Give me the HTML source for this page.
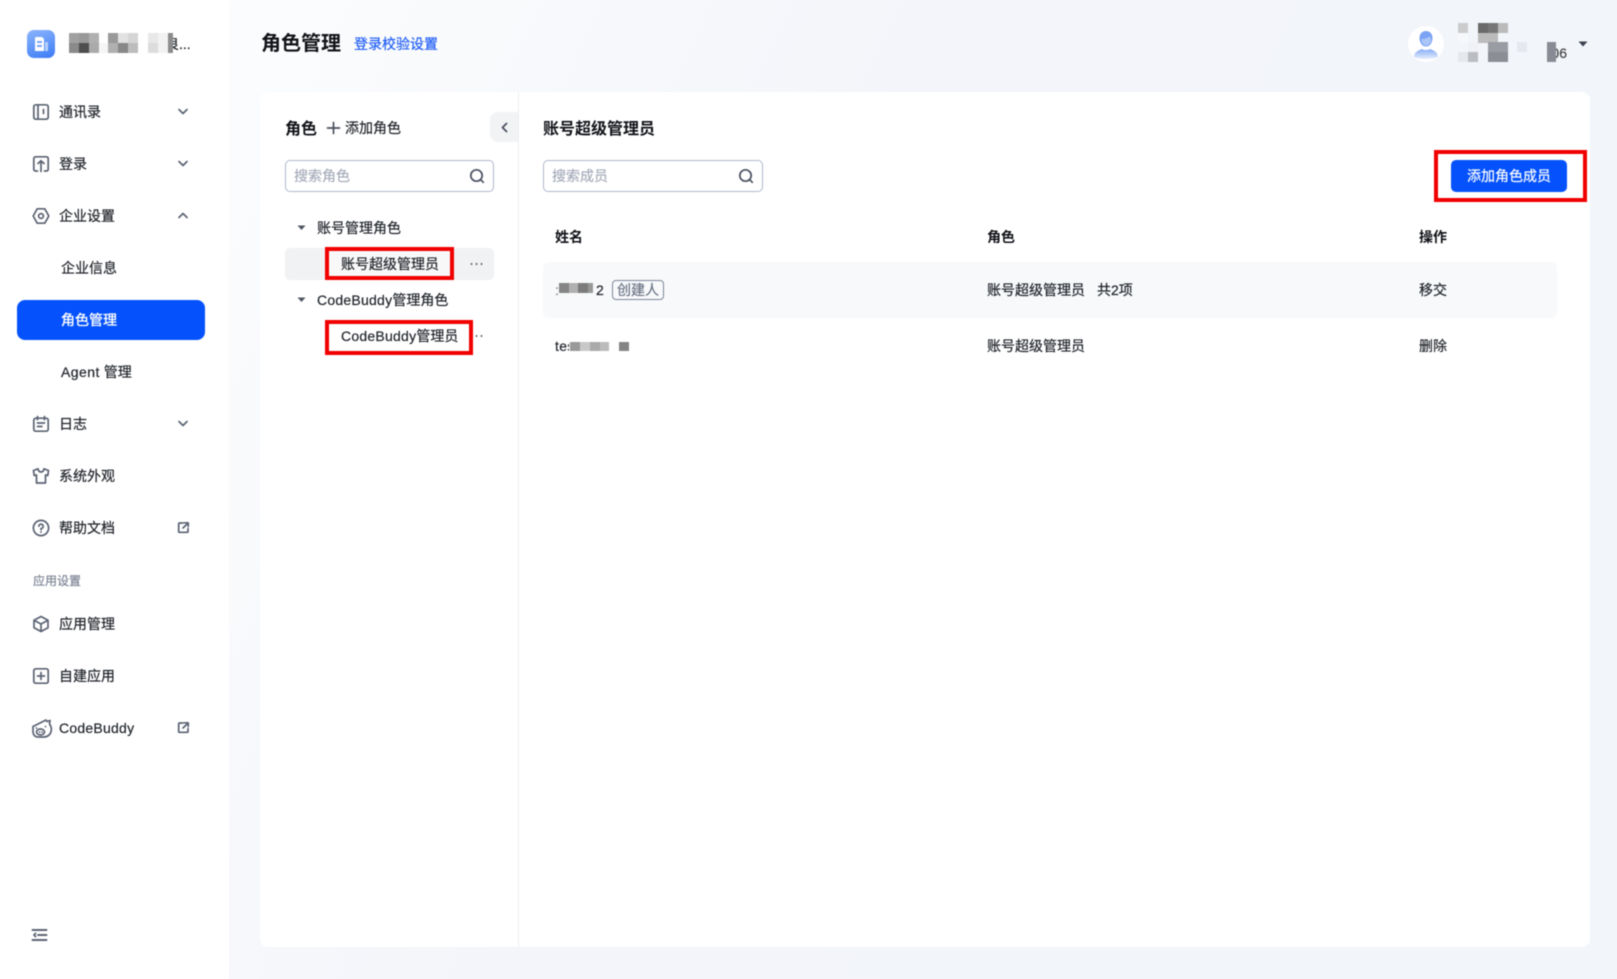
<!DOCTYPE html>
<html lang="zh"><head><meta charset="utf-8"><title>角色管理</title>
<style>
*{box-sizing:border-box}
html,body{margin:0;padding:0}
body{width:1617px;height:979px;overflow:hidden;position:relative;background:linear-gradient(115deg,#fbfcfd 14%,#f3f5fa 45%,#f2f5fa 100%);font-family:"Liberation Sans","Noto Sans CJK SC",sans-serif;font-size:14px;color:#1f2329}
#w{position:absolute;inset:0;filter:blur(.45px)}
.a,.t{position:absolute}
.t{white-space:nowrap;line-height:20px;height:20px;-webkit-text-stroke:.2px currentColor}
.b{font-weight:700;color:#111318;-webkit-text-stroke:0}
.l{letter-spacing:.24px}
.m{background:#7d7d7d;position:absolute}
svg{position:absolute;overflow:visible}
.ic{fill:none;stroke:#5b6373;stroke-width:1.7;stroke-linecap:round;stroke-linejoin:round}
.r{position:absolute;border:4px solid #f10000}
.s{position:absolute;top:160px;height:32px;background:#fff;border:1px solid #b0b7cb;border-radius:5px}
</style></head><body><div id="w">
<div class="a" style="left:0;top:0;width:229px;height:979px;background:#fff"></div>

<!-- logo -->
<div class="a" style="left:27px;top:30px;width:28px;height:28px;border-radius:7px;background:linear-gradient(160deg,#8db4fb,#3b7cf6)"></div>
<div class="a" style="left:35px;top:37px;width:9px;height:14px;background:#fff;border-radius:1px 3px 0 0"></div>
<div class="a" style="left:37px;top:41px;width:5px;height:2px;background:#7aa6f8"></div>
<div class="a" style="left:37px;top:45px;width:5px;height:2px;background:#7aa6f8"></div>
<div class="a" style="left:45px;top:42px;width:3px;height:9px;background:#b5d0fc"></div>
<div class="t" style="left:165px;top:34px;width:30px;overflow:hidden">良...</div>
<div class="m" style="left:69px;top:33px;width:10px;height:10px;background:#a0a0a0"></div>
<div class="m" style="left:79px;top:33px;width:10px;height:10px;background:#999"></div>
<div class="m" style="left:89px;top:33px;width:10px;height:10px;background:#b0b0b0"></div>
<div class="m" style="left:69px;top:43px;width:10px;height:10px;background:#8a8a8a"></div>
<div class="m" style="left:79px;top:43px;width:10px;height:10px;background:#4e4e4e"></div>
<div class="m" style="left:89px;top:43px;width:10px;height:10px;background:#aaa"></div>
<div class="m" style="left:99px;top:43px;width:9px;height:10px;background:#f5f5f5"></div>
<div class="m" style="left:108px;top:33px;width:10px;height:10px;background:#999"></div>
<div class="m" style="left:118px;top:33px;width:10px;height:10px;background:#e2e2e2"></div>
<div class="m" style="left:128px;top:33px;width:10px;height:10px;background:#d5d5d5"></div>
<div class="m" style="left:108px;top:43px;width:10px;height:10px;background:#b0b0b0"></div>
<div class="m" style="left:118px;top:43px;width:10px;height:10px;background:#888"></div>
<div class="m" style="left:128px;top:43px;width:10px;height:10px;background:#bcbcbc"></div>
<div class="m" style="left:148px;top:33px;width:10px;height:10px;background:#e8e8e8"></div>
<div class="m" style="left:158px;top:33px;width:10px;height:10px;background:#f2f2f2"></div>
<div class="m" style="left:148px;top:43px;width:10px;height:10px;background:#dcdcdc"></div>
<div class="m" style="left:158px;top:43px;width:10px;height:10px;background:#f2f2f2"></div>
<div class="m" style="left:168px;top:33px;width:5px;height:20px;background:#8c8c8c"></div>

<!-- menu -->
<svg class="ic" style="left:33px;top:104px" width="16" height="16" viewBox="0 0 16 16"><rect x=".8" y=".8" width="14.4" height="14.4" rx="2"/><path d="M5 1v14M10.500 5.500v4"/></svg>
<div class="t" style="left:59px;top:102px">通讯录</div>
<svg class="ic" style="left:178px;top:108px" width="10" height="8" viewBox="0 0 10 8"><path d="M1 1.500l4 4 4-4"/></svg>

<svg class="ic" style="left:33px;top:156px" width="16" height="16" viewBox="0 0 16 16"><path d="M4.500 15H2.500a1.700 1.700 0 0 1-1.700-1.700V2.500A1.700 1.700 0 0 1 2.500 .8h11a1.700 1.700 0 0 1 1.700 1.700v10.800a1.700 1.700 0 0 1-1.700 1.700h-2M8 15.500V5M5 7.500L8 4.700l3 2.800"/></svg>
<div class="t" style="left:59px;top:154px">登录</div>
<svg class="ic" style="left:178px;top:160px" width="10" height="8" viewBox="0 0 10 8"><path d="M1 1.500l4 4 4-4"/></svg>

<svg class="ic" style="left:33px;top:208px" width="16" height="16" viewBox="0 0 16 16"><path d="M4.200 .8h7.600L15.800 8l-4 7.200H4.200L.2 8z"/><circle cx="8" cy="8" r="2.400"/></svg>
<div class="t" style="left:59px;top:206px">企业设置</div>
<svg class="ic" style="left:178px;top:212px" width="10" height="8" viewBox="0 0 10 8"><path d="M1 5.500l4-4 4 4"/></svg>

<div class="t" style="left:61px;top:258px">企业信息</div>
<div class="a" style="left:17px;top:300px;width:188px;height:40px;border-radius:8px;background:#0552fd"></div>
<div class="t" style="left:61px;top:310px;color:#fff;-webkit-text-stroke:.35px #fff">角色管理</div>
<div class="t" style="left:61px;top:362px"><span style="letter-spacing:.45px">Agent</span> 管理</div>

<svg class="ic" style="left:33px;top:416px" width="16" height="16" viewBox="0 0 16 16"><rect x=".8" y="2.200" width="14.400" height="13" rx="2"/><path d="M4.500 .5v3.200M11.500 .5v3.200M4.500 7h7M4.500 10.500h4.500"/></svg>
<div class="t" style="left:59px;top:414px">日志</div>
<svg class="ic" style="left:178px;top:420px" width="10" height="8" viewBox="0 0 10 8"><path d="M1 1.500l4 4 4-4"/></svg>

<svg class="ic" style="left:33px;top:468px" width="16" height="16" viewBox="0 0 16 16"><path d="M5 .8C5.300 3 6.400 4 8 4s2.700-1 3-3.200L15.500 2.500 14.800 7.500 12.500 7v8h-9V7L1.200 7.500 .5 2.500z"/></svg>
<div class="t" style="left:59px;top:466px">系统外观</div>

<svg class="ic" style="left:33px;top:520px" width="16" height="16" viewBox="0 0 16 16"><circle cx="8" cy="8" r="7.600"/><path d="M5.800 6.200A2.200 2.200 0 1 1 8 8.500v1.300M8 12v.2"/></svg>
<div class="t" style="left:59px;top:518px">帮助文档</div>
<svg class="ic" style="left:178px;top:522px" width="11" height="11" viewBox="0 0 11 11"><path d="M5 1H1.500A.8 .8 0 0 0 .7 1.800v7.700a.8 .8 0 0 0 .8 .8h7.700a.8 .8 0 0 0 .8-.8V6.500M6.500 .8h3.700v3.700M10 1L5 6"/></svg>

<div class="t" style="left:33px;top:571px;font-size:12px;color:#7d8595">应用设置</div>

<svg class="ic" style="left:33px;top:616px" width="16" height="16" viewBox="0 0 16 16"><path d="M8 .5l7 3.800v7.400l-7 3.800-7-3.800V4.300zM1.200 4.400L8 8l6.800-3.600M8 8v7"/></svg>
<div class="t" style="left:59px;top:614px">应用管理</div>

<svg class="ic" style="left:33px;top:668px" width="16" height="16" viewBox="0 0 16 16"><rect x=".8" y=".8" width="14.400" height="14.400" rx="1.800"/><path d="M8 4.500v7M4.500 8h7"/></svg>
<div class="t" style="left:59px;top:666px">自建应用</div>

<svg class="ic" style="left:32px;top:718px" width="20" height="20" viewBox="0 0 20 20"><path d="M1 8.500L14 2l1 1.500L18 2.500 17.500 6c1.500 2 2.200 4.500 1.700 7-.6 3.500-3.700 6-7.200 6H6c-3 0-4.500-2-5-4.500z"/><ellipse cx="8.500" cy="14" rx="4" ry="3"/><path d="M7.500 14v.1M10 14v.1M4.500 10v.1M13.500 8.500v.1"/></svg>
<div class="t l" style="left:59px;top:718px">CodeBuddy</div>
<svg class="ic" style="left:178px;top:722px" width="11" height="11" viewBox="0 0 11 11"><path d="M5 1H1.500A.8 .8 0 0 0 .7 1.800v7.700a.8 .8 0 0 0 .8 .8h7.700a.8 .8 0 0 0 .8-.8V6.500M6.500 .8h3.700v3.700M10 1L5 6"/></svg>

<svg class="ic" style="left:32px;top:929px" width="15" height="12" viewBox="0 0 15 12"><path d="M.5 1h14M.5 11h14M6 6h8.500M3.500 4.500L2 6l1.500 1.500" stroke-width="1.900"/></svg>

<!-- header -->
<div class="t b" style="left:261px;top:32px;font-size:20px;line-height:24px;height:24px">角色管理</div>
<div class="t" style="left:354px;top:34px;color:#1f5ef5">登录校验设置</div>

<div class="a" style="left:1408px;top:26px;width:36px;height:36px;border-radius:50%;background:#fff"></div>
<svg style="left:1408px;top:26px" width="36" height="36" viewBox="0 0 36 36"><defs><linearGradient id="g" x1="0" y1="0" x2="0" y2="1"><stop offset="0" stop-color="#86adf6"/><stop offset="1" stop-color="#e6eefc"/></linearGradient></defs><path d="M11.500 12c0-4.500 3-7 6.500-7s6.500 2.500 6.500 7c0 1.500-.3 3-1 4.500-1 2.500-3 4-5.500 4s-4.500-1.500-5.500-4c-.7-1.500-1-3-1-4.500z" fill="#7ba3f3"/><path d="M13.500 13c3 0 6-.8 8-2.500.6 1 1.200 1.800 1.500 2.500 0 4-2 6.500-5 6.500s-4.500-2.500-4.500-6.500z" fill="#aac6f8"/><path d="M6 31c0-5 5-7 8-8 1.500 1.300 6.500 1.300 8 0 3 1 8 3 8 8-3.500 1.600-8 2-12 2s-8.500-.4-12-2z" fill="url(#g)"/></svg>

<div class="t" style="left:1549px;top:43px;width:18px;text-align:right;color:#444">06</div>
<div class="m" style="left:1458px;top:23px;width:10px;height:10px;background:#ccc"></div>
<div class="m" style="left:1478px;top:23px;width:10px;height:10px;background:#6a6a6a"></div>
<div class="m" style="left:1488px;top:23px;width:10px;height:10px;background:#777"></div>
<div class="m" style="left:1498px;top:23px;width:10px;height:10px;background:#bbb"></div>
<div class="m" style="left:1458px;top:33px;width:10px;height:10px;background:#f6f8fb"></div>
<div class="m" style="left:1478px;top:33px;width:20px;height:10px;background:#bbb"></div>
<div class="m" style="left:1468px;top:42px;width:10px;height:10px;background:#f0f2f6"></div>
<div class="m" style="left:1488px;top:42px;width:20px;height:10px;background:#999ca3"></div>
<div class="m" style="left:1517px;top:42px;width:10px;height:10px;background:#e5e8ee"></div>
<div class="m" style="left:1547px;top:42px;width:9px;height:20px;background:#888b93"></div>
<div class="m" style="left:1458px;top:52px;width:10px;height:10px;background:#e5e8ec"></div>
<div class="m" style="left:1468px;top:52px;width:10px;height:10px;background:#bbbdc2"></div>
<div class="m" style="left:1488px;top:52px;width:20px;height:10px;background:#8b8e95"></div>
<svg style="left:1578px;top:41px" width="10" height="6" viewBox="0 0 10 6"><path d="M.5 .5h9L5 5.500z" fill="#3c424e"/></svg>

<!-- card -->
<div class="a" style="left:260px;top:92px;width:1330px;height:855px;background:#fff;border-radius:8px"></div>
<div class="a" style="left:518px;top:92px;width:1px;height:855px;background:#eceef2"></div>

<div class="t b" style="left:285px;top:120px;font-size:16px">角色</div>
<svg class="ic" style="left:327px;top:122px;stroke:#4a5160" width="13" height="13" viewBox="0 0 13 13"><path d="M6.500 .5v11M.5 6h12"/></svg>
<div class="t" style="left:345px;top:118px">添加角色</div>
<div class="a" style="left:490px;top:112px;width:28px;height:30px;background:#f2f3f5;border-radius:8px 0 0 8px"></div>
<svg class="ic" style="left:501px;top:122px;stroke:#4a5160;stroke-width:1.800" width="7" height="11" viewBox="0 0 7 11"><path d="M5.500 1.500L1.500 5.500l4 4"/></svg>

<div class="s" style="left:285px;width:209px"></div>
<div class="t" style="left:294px;top:166px;color:#a6acba">搜索角色</div>
<svg class="ic" style="left:470px;top:169px;stroke:#4a5160" width="14" height="14" viewBox="0 0 14 14"><circle cx="6.500" cy="6.500" r="5.700"/><path d="M10.800 10.800l2.500 2.500"/></svg>

<svg style="left:297px;top:225px" width="9" height="6" viewBox="0 0 9 6"><path d="M.5 .5h8L4.500 5z" fill="#4f5664"/></svg>
<div class="t" style="left:317px;top:218px">账号管理角色</div>
<div class="a" style="left:285px;top:248px;width:209px;height:32px;background:#f1f2f4;border-radius:5px"></div>
<div class="a" style="left:329px;top:251px;width:121px;height:25px;background:#f8f8f8"></div>
<div class="t" style="left:341px;top:254px">账号超级管理员</div>
<div class="r" style="left:325px;top:247px;width:129px;height:33px"></div>
<svg style="left:470px;top:262px" width="13" height="4" viewBox="0 0 13 4"><g fill="#5b6373"><circle cx="1.500" cy="2" r="1"/><circle cx="6.500" cy="2" r="1"/><circle cx="11.500" cy="2" r="1"/></g></svg>

<svg style="left:297px;top:297px" width="9" height="6" viewBox="0 0 9 6"><path d="M.5 .5h8L4.500 5z" fill="#4f5664"/></svg>
<div class="t" style="left:317px;top:290px"><span class="l">CodeBuddy</span>管理角色</div>
<div class="t" style="left:341px;top:326px"><span class="l">CodeBuddy</span>管理员</div>
<div class="r" style="left:325px;top:320px;width:148px;height:35px"></div>
<svg style="left:475px;top:334px" width="8" height="4" viewBox="0 0 8 4"><g fill="#5b6373"><circle cx="1.500" cy="2" r="1"/><circle cx="6.500" cy="2" r="1"/></g></svg>

<!-- right -->
<div class="t b" style="left:543px;top:120px;font-size:16px">账号超级管理员</div>
<div class="s" style="left:543px;width:220px"></div>
<div class="t" style="left:552px;top:166px;color:#a6acba">搜索成员</div>
<svg class="ic" style="left:739px;top:169px;stroke:#4a5160" width="14" height="14" viewBox="0 0 14 14"><circle cx="6.500" cy="6.500" r="5.700"/><path d="M10.800 10.800l2.500 2.500"/></svg>

<div class="a" style="left:1451px;top:160px;width:116px;height:32px;background:#0552fd;border-radius:5px"></div>
<div class="t" style="left:1467px;top:166px;color:#fff">添加角色成员</div>
<div class="r" style="left:1434px;top:150px;width:153px;height:52px"></div>

<div class="t b" style="left:555px;top:227px">姓名</div>
<div class="t b" style="left:987px;top:227px">角色</div>
<div class="t b" style="left:1419px;top:227px">操作</div>

<div class="a" style="left:543px;top:262px;width:1014px;height:56px;background:#f7f9fb;border-radius:6px"></div>
<div class="t" style="left:555px;top:280px;color:#888">:</div>
<div class="m" style="left:559px;top:283px;width:10px;height:10px;background:#858585"></div>
<div class="m" style="left:569px;top:283px;width:9px;height:10px;background:#b0b0b0"></div>
<div class="m" style="left:578px;top:283px;width:10px;height:10px;background:#7c7c7c"></div>
<div class="m" style="left:588px;top:283px;width:5px;height:10px;background:#999"></div>
<div class="t" style="left:596px;top:280px">2</div>
<div class="a" style="left:612px;top:280px;width:52px;height:20px;border:1px solid #7e889c;border-radius:4px"></div>
<div class="t" style="left:617px;top:280px;color:#6b7484">创建人</div>
<div class="t" style="left:987px;top:280px">账号超级管理员</div>
<div class="t" style="left:1097px;top:280px">共2项</div>
<div class="t" style="left:1419px;top:280px">移交</div>

<div class="t" style="left:555px;top:336px;letter-spacing:.3px">tes</div>
<div class="a" style="left:569px;top:340px;width:62px;height:13px;background:#fff"></div>
<div class="m" style="left:570px;top:342px;width:10px;height:9px;background:#999"></div>
<div class="m" style="left:580px;top:342px;width:10px;height:9px;background:#c8c8c8"></div>
<div class="m" style="left:590px;top:342px;width:10px;height:9px;background:#aaa"></div>
<div class="m" style="left:600px;top:342px;width:9px;height:9px;background:#bbb"></div>
<div class="m" style="left:619px;top:342px;width:10px;height:9px;background:#858585"></div>
<div class="t" style="left:987px;top:336px">账号超级管理员</div>
<div class="t" style="left:1419px;top:336px">删除</div>
</div></body></html>
